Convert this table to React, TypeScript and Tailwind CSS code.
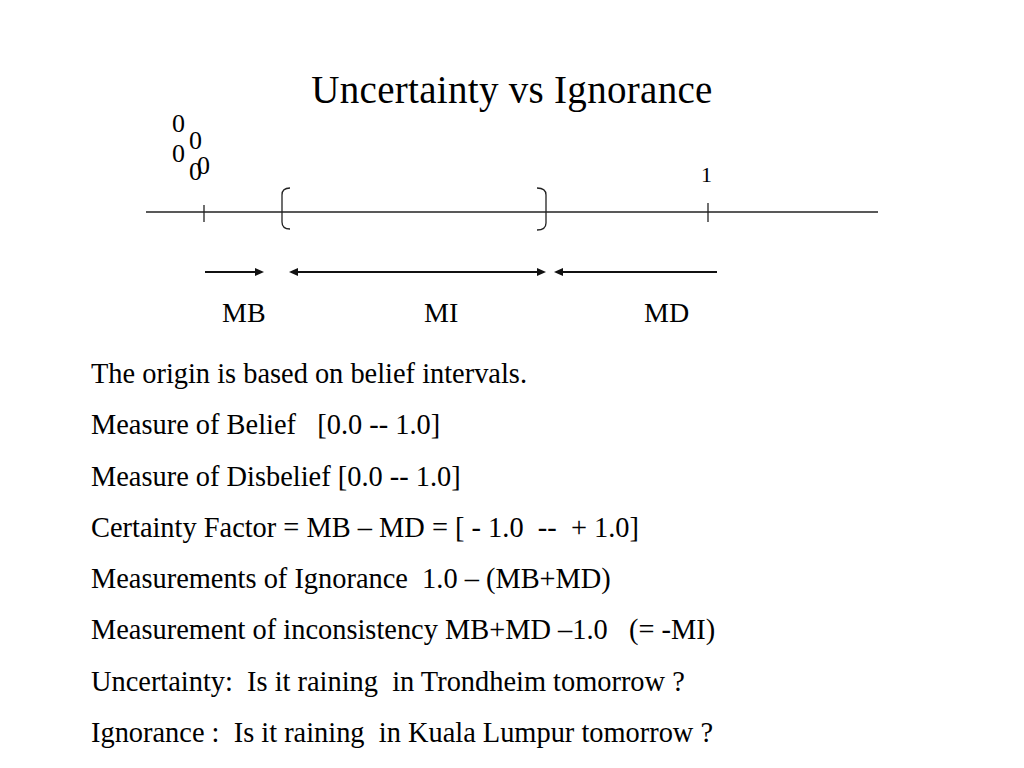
const serif = { fontFamily: '"Liberation Serif", "Times New Roman", serif' }

const LINES = [
  'The origin is based on belief intervals.',
  'Measure of Belief   [0.0 -- 1.0]',
  'Measure of Disbelief [0.0 -- 1.0]',
  'Certainty Factor = MB \u2013 MD = [ - 1.0  --  + 1.0]',
  'Measurements of Ignorance  1.0 \u2013 (MB+MD)',
  'Measurement of inconsistency MB+MD \u20131.0   (= -MI)',
  'Uncertainty:  Is it raining  in Trondheim tomorrow ?',
  'Ignorance :  Is it raining  in Kuala Lumpur tomorrow ?'
]

function Diagram(): JSX.Element {
  return (
    <div className="relative h-[240px] w-full">
      <svg className="absolute inset-0" width="1024" height="240" viewBox="0 108 1024 240" fill="none">
        <line x1="146" y1="212" x2="878" y2="212" stroke="#222" strokeWidth="1.3" />
        <line x1="204" y1="205" x2="204" y2="222" stroke="#222" strokeWidth="1.3" />
        <line x1="708" y1="203" x2="708" y2="222" stroke="#222" strokeWidth="1.3" />
        <path d="M290 188 Q282 188 282 195 V222 Q282 229 290 229" stroke="#222" strokeWidth="1.3" />
        <path d="M537 188 Q546 188 546 195 V223 Q546 230 537 230" stroke="#222" strokeWidth="1.3" />

        <line x1="205" y1="272" x2="256" y2="272" stroke="#111" strokeWidth="2" />
        <path d="M264 272 L255 268 L255 276 Z" fill="#111" />

        <line x1="297" y1="272" x2="538" y2="272" stroke="#111" strokeWidth="2" />
        <path d="M289 272 L298 268 L298 276 Z" fill="#111" />
        <path d="M546 272 L537 268 L537 276 Z" fill="#111" />

        <line x1="562" y1="272" x2="717" y2="272" stroke="#111" strokeWidth="2" />
        <path d="M554 272 L563 268 L563 276 Z" fill="#111" />
      </svg>

      {/* stacked zero labels near the origin tick */}
      <span className="absolute left-[172px] top-[3px] text-[26px] leading-none">0</span>
      <span className="absolute left-[189px] top-[20px] text-[26px] leading-none">0</span>
      <span className="absolute left-[172px] top-[33px] text-[26px] leading-none">0</span>
      <span className="absolute left-[189px] top-[51px] text-[26px] leading-none">0</span>
      <span className="absolute left-[197px] top-[45px] text-[26px] leading-none">0</span>
      <span className="absolute left-[701px] top-[56px] text-[22px] leading-none">1</span>

      <span className="absolute left-[222px] top-[191px] text-[28px] leading-none">MB</span>
      <span className="absolute left-[424px] top-[191px] text-[28px] leading-none">MI</span>
      <span className="absolute left-[644px] top-[191px] text-[28px] leading-none">MD</span>
    </div>
  )
}

export default function App(): JSX.Element {
  return (
    <div className="h-[768px] w-[1024px] overflow-hidden bg-white text-black" style={serif}>
      <h1 className="pt-[72px] text-center text-[39px] leading-[36px] font-normal tracking-[0.3px]">
        Uncertainty vs Ignorance
      </h1>
      <Diagram />
      <div className="flex flex-col pl-[91px]">
        {LINES.map((line) => (
          <p key={line} className="whitespace-pre text-[28.4px] leading-[51.3px]">
            {line}
          </p>
        ))}
      </div>
    </div>
  )
}
